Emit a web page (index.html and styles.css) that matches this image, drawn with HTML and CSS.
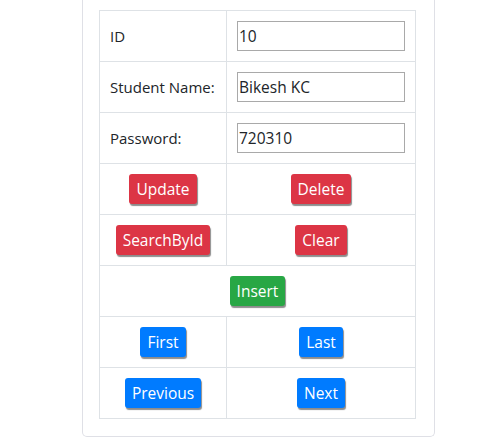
FILE: index.html
```html
<!DOCTYPE html>
<html>
<head>
<meta charset="utf-8">
<link rel="stylesheet" href="styles.css">
</head>
<body>
<div class="card">
  <table class="grid">
    <tr>
      <td class="label">ID</td>
      <td class="field"><input class="inp" type="text" value="10"></td>
    </tr>
    <tr>
      <td class="label">Student Name:</td>
      <td class="field"><input class="inp" type="text" value="Bikesh KC"></td>
    </tr>
    <tr>
      <td class="label">Password:</td>
      <td class="field"><input class="inp" type="text" value="720310"></td>
    </tr>
    <tr>
      <td class="center"><button class="btn red">Update</button></td>
      <td class="center"><button class="btn red">Delete</button></td>
    </tr>
    <tr>
      <td class="center"><button class="btn red">SearchById</button></td>
      <td class="center"><button class="btn red">Clear</button></td>
    </tr>
    <tr>
      <td class="center" colspan="2"><button class="btn green">Insert</button></td>
    </tr>
    <tr>
      <td class="center"><button class="btn blue">First</button></td>
      <td class="center"><button class="btn blue">Last</button></td>
    </tr>
    <tr>
      <td class="center"><button class="btn blue">Previous</button></td>
      <td class="center"><button class="btn blue">Next</button></td>
    </tr>
  </table>
</div>
</body>
</html>
```
FILE: styles.css
```css
html, body {
  margin: 0;
  padding: 0;
  background: #fff;
}
body {
  font-family: "Open Sans", "Noto Sans", sans-serif;
  color: #212529;
}
.card {
  box-sizing: border-box;
  width: 353px;
  margin-left: 82px;
  border: 1px solid #dfe0e6;
  border-top: none;
  border-radius: 0 0 5px 5px;
  padding: 10px 0 17px 16px;
}
.grid {
  border-collapse: collapse;
  width: 317px;
  table-layout: fixed;
}
.grid td {
  border: 1px solid #dee2e6;
  height: 51px;
  padding: 0 10px;
  box-sizing: border-box;
  vertical-align: middle;
}
.grid tr td:first-child { width: 127px; }
.label {
  font-size: 15px;
  white-space: nowrap;
  color: #212529;
}
.inp {
  display: block;
  box-sizing: border-box;
  width: 168px;
  height: 30px;
  border: 1px solid #a9a9a9;
  padding: 0 1px;
  margin: 0;
  font-family: "Open Sans", "Noto Sans", sans-serif;
  font-size: 15.5px;
  color: #212529;
  outline: none;
}
.center { text-align: center; }
.btn {
  display: inline-block;
  border: none;
  border-radius: 3px;
  color: #fff;
  font-family: "Open Sans", "Noto Sans", sans-serif;
  font-size: 15.5px;
  line-height: 30px;
  height: 30px;
  padding: 0 7px;
  margin: 0;
  box-shadow: 1px 2px 1px rgba(0, 0, 0, 0.45);
  vertical-align: middle;
}
.red { background: #dc3545; }
.green { background: #28a745; }
.blue { background: #007bff; }
```
